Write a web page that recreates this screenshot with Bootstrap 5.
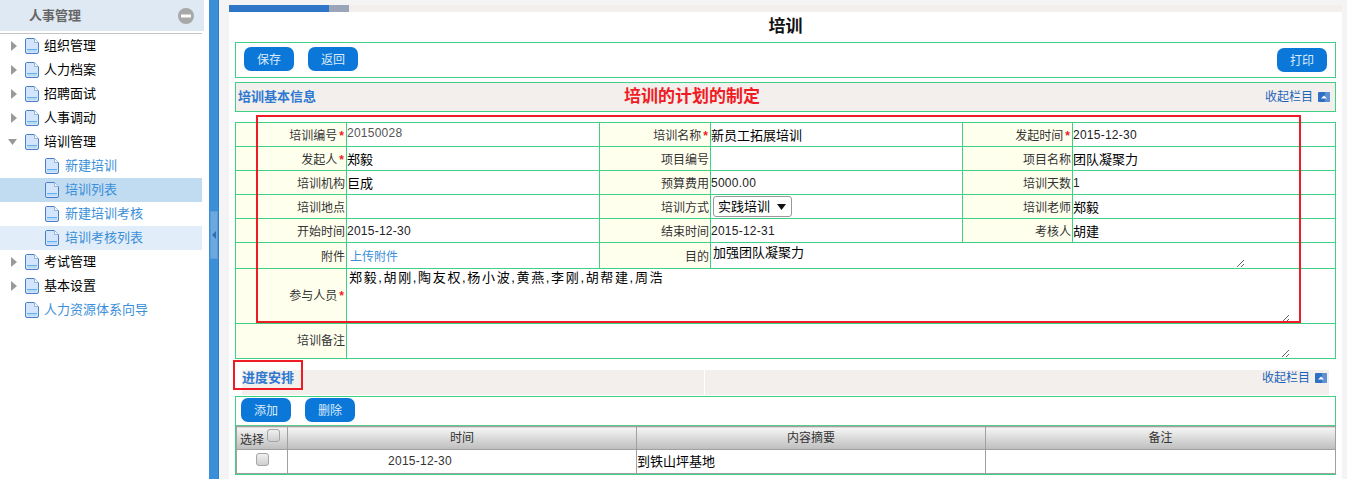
<!DOCTYPE html>
<html lang="zh">
<head>
<meta charset="utf-8">
<title>培训</title>
<link rel="stylesheet" href="https://cdn.jsdelivr.net/npm/bootstrap@5.3.0/dist/css/bootstrap.min.css">
<style>
html,body{height:479px;overflow:hidden}
body{background:#fff;font-family:"Liberation Sans","Noto Sans CJK SC",sans-serif;font-size:12px;color:#333;line-height:1.2}
.shell{height:479px}
.side{width:209px;flex:none}
.side-head{width:204px;height:31px;background:#dfe9f3;padding:0 10px 0 29px;color:#666;font-weight:700;font-size:13px}
.side-rule{width:202px;height:1px;margin:2px 0 0;background:#c4c4c4}
.tree{width:202px;margin:0;padding:0;list-style:none}
.tree li{height:24px;display:flex;align-items:center;font-size:13px;color:#000}
.tree .arrow{width:25px;flex:none;padding-left:11px;display:flex}
.tree .page{flex:none;margin-right:5px}
.tree .sub{padding-left:45px;color:#3a8fd8}
.tree .sub .page{margin-right:6px}
.tree .bluelink{color:#3a8fd8}
.tree .picked{background:#c1dbf1}
.tree .hovered{background:#e1edf8}
.splitter{width:10px;flex:none;background:#3a8fd8;border-right:1px solid #2f7cc4}
.grip{width:8px;height:48px;margin:211px 0 0 1px;background:#6ba9e0;border:1px solid #5b9bd6}
.gutter{width:10px;flex:none;background:#f4f4f4}
.gutter-r{width:5px;flex:none;background:#f4f4f4}
.main{width:1113px;flex:none;position:relative}
.tabbar{height:12px;background:#f4f4f4;padding-top:5px}
.tabtrack{height:7px;background:#f2efed}
.tab-on{width:100px;background:#2f75c8}
.tab-off{width:20px;background:#9aa5b8}
.ttl{height:30px;font-size:17px;font-weight:700;color:#111}
.inner{margin:0 6px}
.boxline{border:1px solid #3fd083}
.bar1{height:36px;padding:4px 8px;margin-bottom:4px;gap:14px}
.act{width:50px;height:24px;padding:0;border:0;border-radius:7px;background:#0b77d9;color:#dcecfb;font-size:12px;line-height:26px}
.act:hover{background:#0b77d9;color:#dcecfb}
.act-low{margin-top:1px}
.sechead{height:30px;background:#f2efed;padding:0 5px 0 2px;margin-bottom:10px}
.sectitle{color:#2f78d0;font-weight:700;font-size:13px}
.plan{color:#f01c24;font-weight:700;font-size:17px;margin-left:308px}
.fold{color:#1f63b8;font-size:12px;white-space:nowrap}
.fold svg{margin-left:5px}
.formtbl{table-layout:fixed;width:1100px;border-collapse:collapse;margin:0;font-size:12px}
.formtbl td{border:1px solid #3fd083;padding:2px 0 0;vertical-align:middle;overflow:hidden;background:#fff;color:#000;font-size:13px}
.formtbl td.lbl{background:#ffffee;color:#333;text-align:right;padding:3px 1px 0 0;font-size:12px}
.formtbl td.tall{padding-top:0}
.formtbl td.lbl.tall{padding-top:1px}
.lbl i{color:#f01c24;font-style:normal;font-weight:700;padding:0 1px 0 2px}
.r24{height:24px}.r26{height:26px}.r55{height:55px}.r35{height:35px}
.formtbl td.num{font-size:12px;color:#222;letter-spacing:.25px}
.gray{color:#555;font-size:12px;letter-spacing:.25px;vertical-align:5px}
.uplink{color:#3a8fd8;margin-left:3px;font-size:12px}
.formtbl textarea{display:block;border:0;outline:0;padding:2px 2px 0;width:100%;background:transparent;color:#000;font-size:13px;font-family:inherit;line-height:16px}
.ta1{height:25px;width:534px!important}
.ta2{height:54px;width:943px!important;letter-spacing:1.65px;padding-top:1px!important}
.ta3{height:34px;width:943px!important}
.pick{appearance:none;width:79px;height:21px;margin:-2px 0 0 2px;font-size:13px;padding:0 0 0 4px;border:1px solid #999;border-radius:3px;color:#000;font-family:inherit;background:#fff url("data:image/svg+xml,%3Csvg xmlns='http://www.w3.org/2000/svg' width='9' height='6'%3E%3Cpath d='M0 0H9L4.5 6Z' fill='%23111'/%3E%3C/svg%3E") no-repeat right 5px center}
.sechead2{height:25px;margin:11px 7px 1px;background:linear-gradient(90deg,#f2efed 462px,#fff 462px,#fff 463px,#f2efed 463px);padding:0 2px 0 0}
.sechead2 .sectitle,.sechead2 .fold{margin-bottom:9px}
.box2{height:79px}
.bar2{height:28px;padding:1px 5px;gap:14px}
.gridwrap{border-top:1px solid #5cc98a}
.gridtbl{table-layout:fixed;width:1099px;border-collapse:collapse;margin:0}
.gridtbl th,.gridtbl td{border:1px solid #a0a0a0;padding:0;font-size:12px;font-weight:400;color:#333;text-align:center;vertical-align:middle}
.gridtbl tr:first-child>*{height:23px;background:linear-gradient(#f6f6f6,#bdbdbd)}
.gridtbl tr:last-child>*{height:24px;background:#fff}
.gridtbl input{appearance:none;margin:0;width:13px;height:13px;vertical-align:2px;border:1px solid #a5a5a5;border-radius:3px;background:linear-gradient(#f0f0f0,#cfcfcf)}
.gridtbl td input{vertical-align:0}
.gridtbl th.pickcol{text-align:left;padding-left:3px}
.gridtbl td.cjk13{text-align:left;font-size:13px;color:#000}
.gridtbl td.dt{padding-right:84px;letter-spacing:.25px}
.mark1{position:absolute;left:27px;top:115px;width:1045px;height:208px;border:2px solid #ee1c25;pointer-events:none}
.mark2{position:absolute;left:4px;top:360px;width:70px;height:30px;border:2px solid #ee1c25;pointer-events:none}
</style>
</head>
<body>
<svg width="0" height="0" class="position-absolute">
<defs>
<symbol id="doc" viewBox="0 0 14 16">
<path d="M1.5.5H9.5L13.5 4.5V14a1.5 1.5 0 0 1-1.5 1.5H2A1.5 1.5 0 0 1 .5 14V2A1.5 1.5 0 0 1 1.5.5Z" fill="#d3e5fa" stroke="#4a7fc8"/>
<path d="M9.5.5V4.5H13.5" fill="#fff" stroke="#8fb2de"/>
<rect x="2" y="11" width="10" height="1" fill="#64b1ec"/>
<rect x="2" y="12.5" width="10" height="1" fill="#9fd0f5"/>
</symbol>
<symbol id="upfold" viewBox="0 0 12 10">
<rect width="12" height="10" rx="1" fill="#2f6fc4"/>
<rect x="7" width="5" height="10" fill="#7fa8dd" opacity=".6"/>
<path d="M3 6.5 6 3.5 9 6.5Z" fill="#fff"/>
</symbol>
</defs>
</svg>
<div class="shell d-flex">
  <aside class="side">
    <div class="side-head d-flex align-items-center justify-content-between">
      <span>人事管理</span>
      <svg width="16" height="16" viewBox="0 0 16 16"><circle cx="8" cy="8" r="8" fill="#a8a8a8"/><rect x="3" y="6.5" width="10" height="3" fill="#fff"/></svg>
    </div>
    <div class="side-rule"></div>
    <ul class="tree">
      <li><span class="arrow"><svg width="6" height="10" viewBox="0 0 6 10"><path d="M0 0 6 5 0 10Z" fill="#999"/></svg></span><svg class="page" width="14" height="16"><use href="#doc"/></svg>组织管理</li>
      <li><span class="arrow"><svg width="6" height="10" viewBox="0 0 6 10"><path d="M0 0 6 5 0 10Z" fill="#999"/></svg></span><svg class="page" width="14" height="16"><use href="#doc"/></svg>人力档案</li>
      <li><span class="arrow"><svg width="6" height="10" viewBox="0 0 6 10"><path d="M0 0 6 5 0 10Z" fill="#999"/></svg></span><svg class="page" width="14" height="16"><use href="#doc"/></svg>招聘面试</li>
      <li><span class="arrow"><svg width="6" height="10" viewBox="0 0 6 10"><path d="M0 0 6 5 0 10Z" fill="#999"/></svg></span><svg class="page" width="14" height="16"><use href="#doc"/></svg>人事调动</li>
      <li><span class="arrow ps-2"><svg width="9" height="6" viewBox="0 0 9 6"><path d="M0 0H9L4.5 6Z" fill="#999"/></svg></span><svg class="page" width="14" height="16"><use href="#doc"/></svg>培训管理</li>
      <li class="sub"><svg class="page" width="14" height="16"><use href="#doc"/></svg>新建培训</li>
      <li class="sub picked"><svg class="page" width="14" height="16"><use href="#doc"/></svg>培训列表</li>
      <li class="sub"><svg class="page" width="14" height="16"><use href="#doc"/></svg>新建培训考核</li>
      <li class="sub hovered"><svg class="page" width="14" height="16"><use href="#doc"/></svg>培训考核列表</li>
      <li><span class="arrow"><svg width="6" height="10" viewBox="0 0 6 10"><path d="M0 0 6 5 0 10Z" fill="#999"/></svg></span><svg class="page" width="14" height="16"><use href="#doc"/></svg>考试管理</li>
      <li><span class="arrow"><svg width="6" height="10" viewBox="0 0 6 10"><path d="M0 0 6 5 0 10Z" fill="#999"/></svg></span><svg class="page" width="14" height="16"><use href="#doc"/></svg>基本设置</li>
      <li class="bluelink"><span class="arrow"></span><svg class="page" width="14" height="16"><use href="#doc"/></svg>人力资源体系向导</li>
    </ul>
  </aside>
  <div class="splitter">
    <div class="grip d-flex align-items-center justify-content-center"><svg width="4" height="8" viewBox="0 0 4 8"><path d="M4 0 0 4 4 8Z" fill="#2f6fb4"/></svg></div>
  </div>
  <div class="gutter"></div>
  <main class="main">
    <div class="tabbar"><div class="tabtrack d-flex"><div class="tab-on"></div><div class="tab-off"></div></div></div>
    <div class="ttl d-flex align-items-center justify-content-center">培训</div>
    <div class="inner">
      <div class="boxline bar1 d-flex align-items-start">
        <button type="button" class="btn act">保存</button>
        <button type="button" class="btn act">返回</button>
        <button type="button" class="btn act act-low ms-auto">打印</button>
      </div>
      <div class="boxline sechead d-flex align-items-center">
        <span class="sectitle">培训基本信息</span>
        <span class="plan">培训的计划的制定</span>
        <span class="fold ms-auto d-flex align-items-center">收起栏目<svg width="12" height="10"><use href="#upfold"/></svg></span>
      </div>
      <table class="formtbl">
        <colgroup><col style="width:111px"><col style="width:253px"><col style="width:111px"><col style="width:252px"><col style="width:110px"><col style="width:263px"></colgroup>
        <tr class="r24"><td class="lbl">培训编号<i>*</i></td><td><span class="gray">20150028</span></td><td class="lbl">培训名称<i>*</i></td><td>新员工拓展培训</td><td class="lbl">发起时间<i>*</i></td><td class="num">2015-12-30</td></tr>
        <tr class="r24"><td class="lbl">发起人<i>*</i></td><td>郑毅</td><td class="lbl">项目编号</td><td></td><td class="lbl">项目名称</td><td>团队凝聚力</td></tr>
        <tr class="r24"><td class="lbl">培训机构</td><td>巨成</td><td class="lbl">预算费用</td><td class="num">5000.00</td><td class="lbl">培训天数</td><td class="num">1</td></tr>
        <tr class="r24"><td class="lbl">培训地点</td><td></td><td class="lbl">培训方式</td><td><select class="pick"><option>实践培训</option></select></td><td class="lbl">培训老师</td><td>郑毅</td></tr>
        <tr class="r24"><td class="lbl">开始时间</td><td class="num">2015-12-30</td><td class="lbl">结束时间</td><td class="num">2015-12-31</td><td class="lbl">考核人</td><td>胡建</td></tr>
        <tr class="r26"><td class="lbl">附件</td><td><span class="uplink">上传附件</span></td><td class="lbl">目的</td><td class="tall" colspan="3"><textarea class="ta1">加强团队凝聚力</textarea></td></tr>
        <tr class="r55"><td class="lbl tall">参与人员<i>*</i></td><td class="tall" colspan="5"><textarea class="ta2">郑毅,胡刚,陶友权,杨小波,黄燕,李刚,胡帮建,周浩</textarea></td></tr>
        <tr class="r35"><td class="lbl tall">培训备注</td><td class="tall" colspan="5"><textarea class="ta3"></textarea></td></tr>
      </table>
      <div class="sechead2 d-flex align-items-center justify-content-between">
        <span class="sectitle">进度安排</span>
        <span class="fold d-flex align-items-center">收起栏目<svg width="12" height="10"><use href="#upfold"/></svg></span>
      </div>
      <div class="boxline box2">
        <div class="bar2 d-flex align-items-start">
          <button type="button" class="btn act">添加</button>
          <button type="button" class="btn act">删除</button>
        </div>
        <div class="gridwrap">
        <table class="gridtbl">
          <colgroup><col style="width:51px"><col style="width:349px"><col style="width:349px"><col style="width:350px"></colgroup>
          <tr><th class="pickcol">选择 <input type="checkbox"></th><th>时间</th><th>内容摘要</th><th>备注</th></tr>
          <tr><td><input type="checkbox"></td><td class="dt">2015-12-30</td><td class="cjk13">到铁山坪基地</td><td></td></tr>
        </table>
        </div>
      </div>
    </div>
    <div class="mark1"></div>
    <div class="mark2"></div>
  </main>
  <div class="gutter-r"></div>
</div>
<script src="https://cdn.jsdelivr.net/npm/bootstrap@5.3.0/dist/js/bootstrap.bundle.min.js"></script>
</body>
</html>
